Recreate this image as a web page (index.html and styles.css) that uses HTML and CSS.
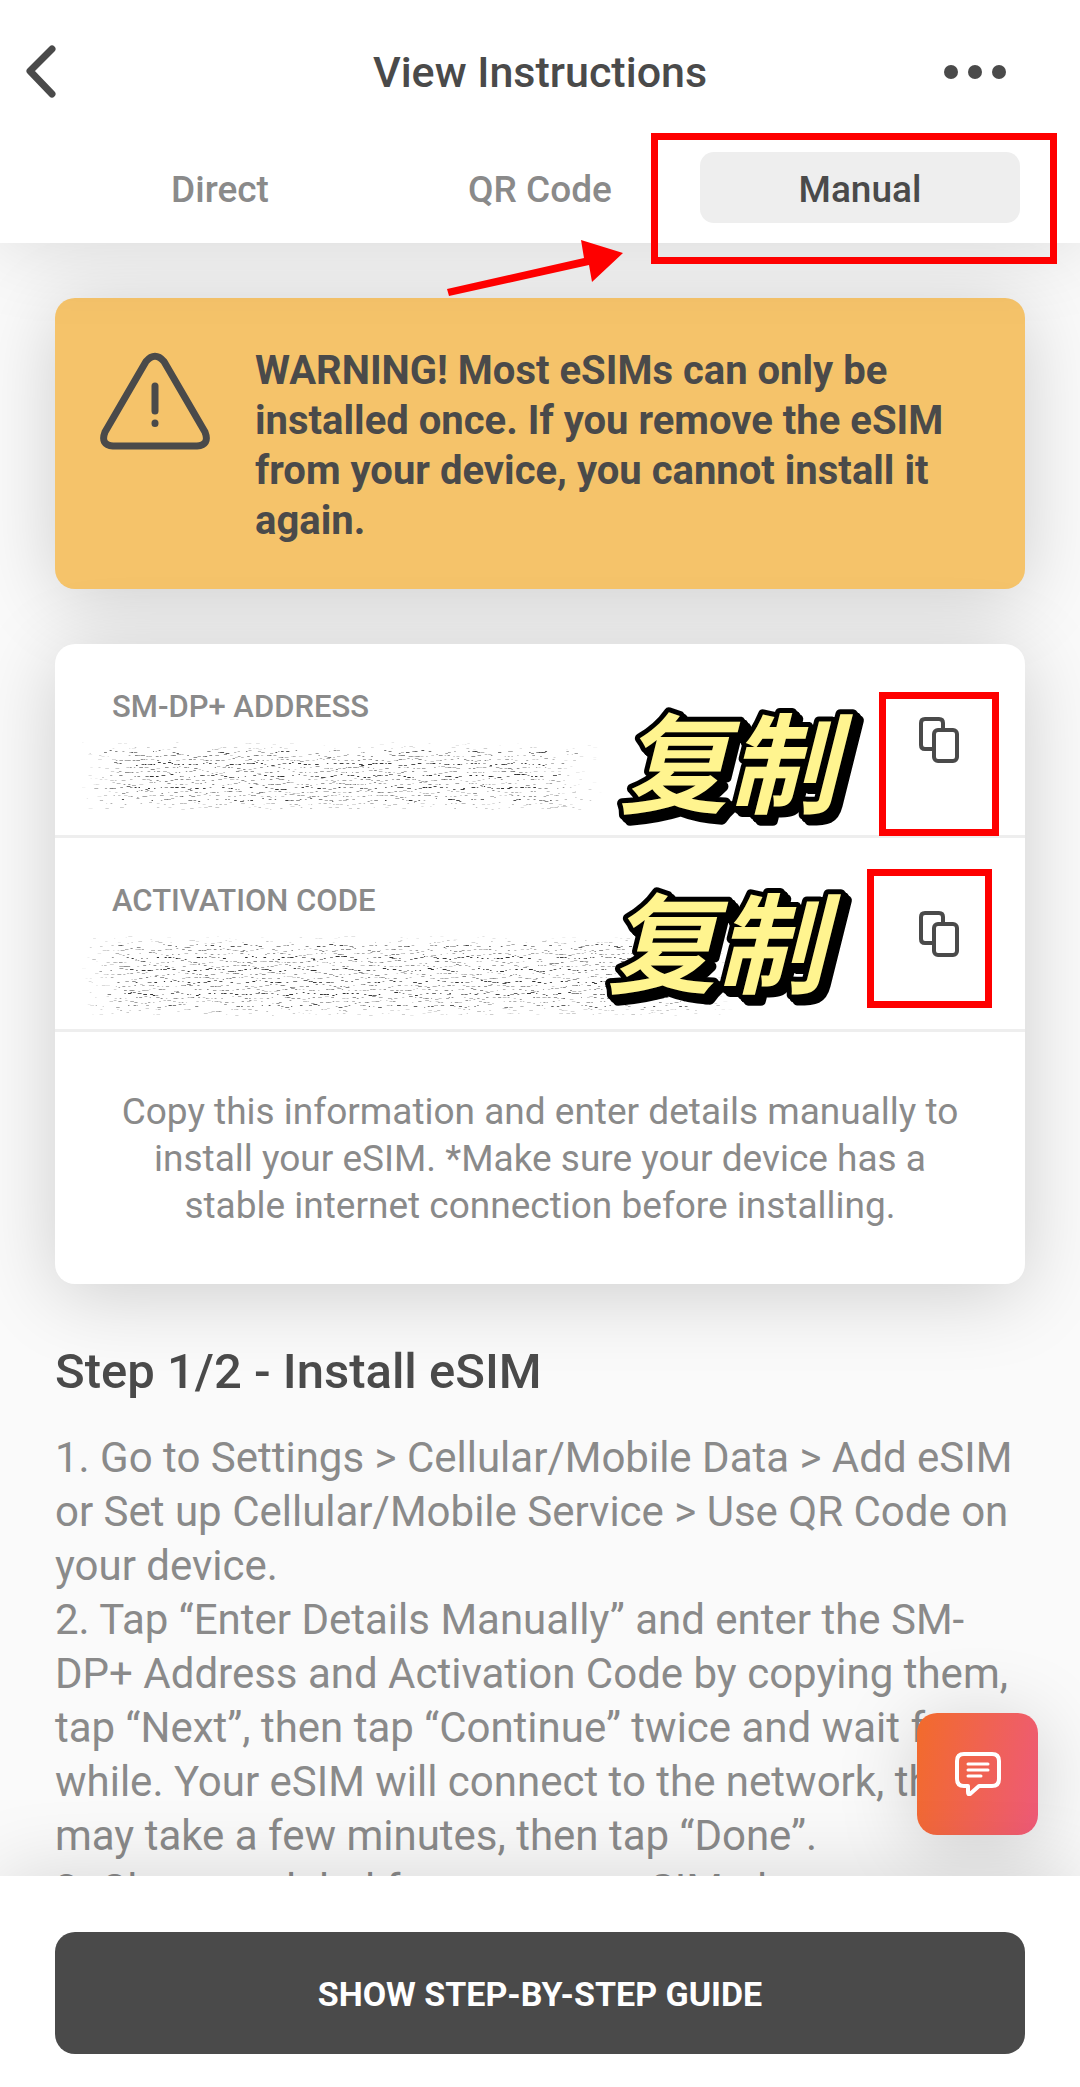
FILE: index.html
```
<!DOCTYPE html>
<html lang="en">
<head>
    <meta charset="UTF-8">
    <meta name="viewport" content="width=device-width, initial-scale=1.0">
    <title>View Instructions</title>
    <link rel="stylesheet" href="styles.css">
</head>
<body>

    <header class="header">
        <div class="title-bar">
            <button class="icon-btn" aria-label="Back">
                <svg width="36" height="60" viewBox="0 0 36 60"><path d="M30 7 8 29l22 23" fill="none" stroke="#4a4a4a" stroke-width="7" stroke-linecap="round" stroke-linejoin="round"/></svg>
            </button>
            <h1>View Instructions</h1>
            <button class="icon-btn more" aria-label="More">
                <svg width="66" height="16" viewBox="0 0 66 16" fill="#4a4a4a"><circle cx="9" cy="8" r="7"/><circle cx="33" cy="8" r="7"/><circle cx="57" cy="8" r="7"/></svg>
            </button>
        </div>
        <nav class="tabs">
            <button class="tab">Direct</button>
            <button class="tab">QR Code</button>
            <button class="tab active">Manual<span class="mark mark-tab"></span></button>
        </nav>
        <svg class="arrow" width="180" height="58" viewBox="0 0 180 58"><path d="M0 49 137 18 134 0l42 13-31 29-3-17L2 56z" fill="#fe0000"/></svg>
    </header>

    <main class="content">
        <section class="warning">
            <svg width="112" height="98" viewBox="0 0 112 98" fill="none" stroke="#4a4a4a" stroke-width="7" stroke-linecap="round" stroke-linejoin="round">
                <path d="M47 9.500Q56-1 65 9.500L106 80Q111 93 98 94H14Q1 93 6 80Z"/>
                <path d="M56 34v25M56 71v.5"/>
            </svg>
            <p>WARNING! Most eSIMs can only be installed once. If you remove the eSIM from your device, you cannot install it again.</p>
        </section>

        <section class="card">
            <div class="row">
                <div class="label">SM-DP+ ADDRESS</div>
                <canvas class="scribble" width="530" height="84"></canvas>
                <svg class="sticker" width="250" height="136" lang="zh-CN"><text x="4" y="106">复制</text></svg>
                <button class="copy-btn" aria-label="Copy address">
                    <svg width="40" height="46" viewBox="0 0 40 46" fill="none" stroke="#4a4a4a" stroke-width="4" stroke-linejoin="round"><path d="M15 32H6q-4 0-4-4V6q0-4 4-4h14q4 0 4 4v7"/><rect x="15" y="13" width="23" height="31" rx="4"/></svg>
                </button>
                <span class="mark mark-address"></span>
            </div>
            <div class="row">
                <div class="label">ACTIVATION CODE</div>
                <canvas class="scribble" width="660" height="94"></canvas>
                <svg class="sticker sticker-code" width="250" height="136" lang="zh-CN"><text x="4" y="106">复制</text></svg>
                <button class="copy-btn" aria-label="Copy code">
                    <svg width="40" height="46" viewBox="0 0 40 46" fill="none" stroke="#4a4a4a" stroke-width="4" stroke-linejoin="round"><path d="M15 32H6q-4 0-4-4V6q0-4 4-4h14q4 0 4 4v7"/><rect x="15" y="13" width="23" height="31" rx="4"/></svg>
                </button>
                <span class="mark mark-code"></span>
            </div>
            <p class="note">Copy this information and enter details manually to<br>install your eSIM. *Make sure your device has a<br>stable internet connection before installing.</p>
        </section>

        <section class="steps">
            <h2>Step 1/2 - Install eSIM</h2>
            <p>1. Go to Settings &gt; Cellular/Mobile Data &gt; Add eSIM<br>or Set up Cellular/Mobile Service &gt; Use QR Code on<br>your device.</p>
            <p>2. Tap “Enter Details Manually” and enter the SM-<br>DP+ Address and Activation Code by copying them,<br>tap “Next”, then tap “Continue” twice and wait for a<br>while. Your eSIM will connect to the network, this<br>may take a few minutes, then tap “Done”.</p>
            <p>3. Choose a label for your new eSIM plan.</p>
        </section>
    </main>

    <button class="chat-btn" aria-label="Chat">
        <svg width="46" height="44" viewBox="0 0 46 44" fill="none" stroke="#fff" stroke-linecap="round" stroke-linejoin="round">
            <path d="M9 2h28q7 0 7 7v18q0 7-7 7H24l-9 8q-2 1-2-2v-6H9q-7 0-7-7V9q0-7 7-7z" stroke-width="4"/>
            <path d="M13 12h20M13 18h20M13 24h13" stroke-width="3"/>
        </svg>
    </button>

    <footer class="footer">
        <button class="guide-btn">SHOW STEP-BY-STEP GUIDE</button>
    </footer>

    <script src="script.js"></script>
</body>
</html>
```
FILE: styles.css
```
* {
    box-sizing: border-box;
}

body {
    margin: 0;
    height: 100vh;
    display: flex;
    flex-direction: column;
    background: #fafafa;
    color: #4a4a4a;
    font-family: Roboto, "Liberation Sans", sans-serif;
    overflow: hidden;
}

h1, h2, p {
    margin: 0;
}

button {
    border: none;
    padding: 0;
    background: none;
    font-family: inherit;
    color: inherit;
    cursor: pointer;
}

svg {
    display: block;
}

/* Header */
.header {
    position: relative;
    z-index: 2;
    padding: 36px 60px 20px;
    background: #fff;
    box-shadow: 0 0 80px rgba(0, 0, 0, 0.15);
}

.title-bar {
    display: grid;
    grid-template-columns: 1fr auto 1fr;
    align-items: center;
    height: 72px;
    margin: 0 -38px 44px;
}

.icon-btn {
    width: 68px;
}

.more {
    justify-self: end;
    margin-right: 48px;
}

.title-bar h1 {
    font-size: 43px;
    font-weight: 500;
}

.tabs {
    display: flex;
}

.tab {
    position: relative;
    flex: 1;
    height: 71px;
    padding-top: 3px;
    border-radius: 14px;
    font-size: 37px;
    font-weight: 500;
    color: #8a8a8a;
}

.tab.active {
    background: #eee;
    color: #4a4a4a;
}

/* Red markers */
.mark {
    position: absolute;
    border: 7px solid #fe0000;
    pointer-events: none;
}

.mark-tab {
    inset: -19px -37px -41px -49px;
}

.mark-address {
    top: 48px;
    right: 26px;
    width: 120px;
    height: 144px;
}

.mark-code {
    top: 31px;
    right: 33px;
    width: 125px;
    height: 139px;
}

.arrow {
    position: absolute;
    top: 240px;
    right: 453px;
}

/* Content */
.content {
    flex: 1;
    min-height: 0;
    overflow: hidden;
    padding: 55px 55px 0;
}

.warning {
    display: flex;
    align-items: flex-start;
    gap: 44px;
    padding: 48px 45px 43px 44px;
    border-radius: 20px;
    background: #f5c36a;
    box-shadow: 0 10px 80px rgba(0, 0, 0, 0.18);
}

.warning svg {
    flex: none;
    margin-top: 6px;
}

.warning p {
    font-size: 40px;
    font-weight: 700;
    line-height: 50px;
}

.card {
    margin-top: 55px;
    border-radius: 20px;
    background: #fff;
    box-shadow: 0 10px 80px rgba(0, 0, 0, 0.18);
}

.row {
    position: relative;
    height: 194px;
    padding: 45px 57px 0;
    border-bottom: 3px solid #eee;
}

.label {
    font-size: 31px;
    font-weight: 500;
    line-height: 36px;
    color: #8a8a8a;
}

.scribble {
    display: block;
    margin: 14px 0 0 -34px;
}

.copy-btn {
    position: absolute;
    top: 73px;
    right: 66px;
}

.sticker {
    position: absolute;
    top: 55px;
    right: 160px;
    overflow: visible;
    font-family: "Noto Sans CJK SC", sans-serif;
    font-size: 109px;
    font-weight: 700;
    font-style: italic;
    fill: #fff48f;
    stroke: #000;
    stroke-width: 10px;
    stroke-linejoin: round;
    paint-order: stroke;
    filter: drop-shadow(3px 3px 0 #000) drop-shadow(3px 3px 0 #000);
}

.sticker-code {
    top: 41px;
    right: 172px;
}

.note {
    padding: 56px 40px 55px;
    font-size: 37px;
    line-height: 47px;
    color: #8a8a8a;
    text-align: center;
}

/* Steps */
.steps h2 {
    margin: 57px 0 28px;
    font-size: 49px;
    font-weight: 500;
    line-height: 62px;
}

.steps p {
    font-size: 42px;
    line-height: 54px;
    color: #8a8a8a;
    white-space: nowrap;
}

/* Chat button */
.chat-btn {
    position: fixed;
    right: 42px;
    bottom: 252px;
    z-index: 1;
    display: flex;
    align-items: center;
    justify-content: center;
    width: 121px;
    height: 122px;
    border-radius: 20px;
    background: linear-gradient(100deg, #f26b2b, #ee5a78);
    box-shadow: 0 10px 80px rgba(0, 0, 0, 0.18);
}

/* Footer */
.footer {
    position: relative;
    z-index: 2;
    padding: 56px 55px 33px;
    background: #fff;
    box-shadow: 0 0 80px rgba(0, 0, 0, 0.15);
}

.guide-btn {
    width: 100%;
    height: 122px;
    padding-top: 2px;
    border-radius: 20px;
    background: #4a4a4a;
    color: #fff;
    font-size: 34px;
    font-weight: 700;
}
```
FILE: script.js
```
// Scratches out the private values with rows of small broken specks
let seed = 7;

function random() {
    seed = (seed * 16807) % 2147483647;
    return seed / 2147483647;
}

document.querySelectorAll('.scribble').forEach((canvas) => {
    const ctx = canvas.getContext('2d');
    const w = canvas.width;
    const h = canvas.height;

    for (let y = 4; y < h - 12; y += 4) {
        const strong = y % 12 === 0 ? 1 : 0.5;
        for (let x = 4; x < w - 6; x += 2 + random() * 5) {
            const edge = Math.min(1, x / 50, (w - x) / 80, y / 16, (h - y) / 30);
            if (random() > edge * 0.85) continue;
            const wave = Math.sin(x / 7 + y);
            ctx.fillStyle = `rgba(50, 50, 50, ${strong * edge * (0.4 + random() * 0.8)})`;
            ctx.fillRect(x, Math.round(y + wave + random()), 1 + random() * 3, 1);
        }
    }
});
```
